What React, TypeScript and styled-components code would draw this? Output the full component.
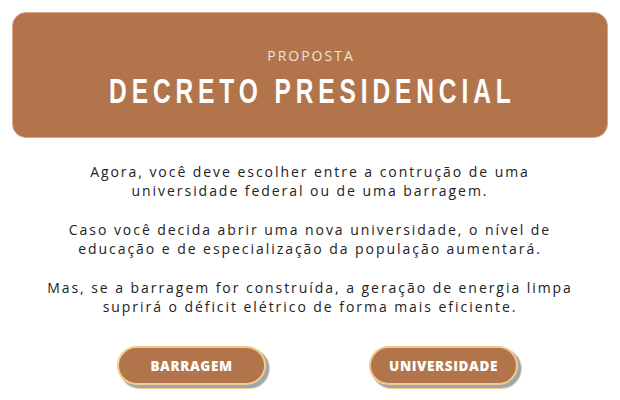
import React from "react";
import styled, { createGlobalStyle } from "styled-components";

const Global = createGlobalStyle`
  html, body { margin: 0; padding: 0; background: #ffffff; }
  body { width: 620px; height: 400px; overflow: hidden; }
`;

const Page = styled.div`
  width: 620px;
  height: 400px;
  box-sizing: border-box;
  padding: 12px 12px 0 12px;
  display: flex;
  flex-direction: column;
  align-items: center;
`;

const Header = styled.header`
  width: 596px;
  height: 126px;
  box-sizing: border-box;
  background: #b2754b;
  border: 1px solid #d3a888;
  border-radius: 14px;
  display: flex;
  flex-direction: column;
  align-items: center;
  justify-content: center;
  gap: 6px;
  padding-top: 7px;
`;

const Kicker = styled.div`
  font-family: "Open Sans", "Liberation Sans", sans-serif;
  font-size: 14px;
  font-weight: 400;
  letter-spacing: 2px;
  color: #f3e2d6;
  line-height: 18px;
  padding-left: 2px;
`;

const Title = styled.h1`
  margin: 0;
  display: inline-block;
  font-family: "Liberation Sans", "DejaVu Sans", sans-serif;
  font-weight: 700;
  font-size: 35px;
  line-height: 40px;
  letter-spacing: 7px;
  color: #ffffff;
  white-space: nowrap;
  transform: scaleX(0.7);
  transform-origin: center;
  padding-left: 7px;
`;

const Body = styled.div`
  margin-top: 24px;
  display: flex;
  flex-direction: column;
  align-items: center;
  gap: 20px;
`;

const Para = styled.p`
  margin: 0;
  text-align: center;
  font-family: "Open Sans", "Liberation Sans", sans-serif;
  font-size: 14px;
  line-height: 19px;
  letter-spacing: 1.95px;
  color: #222222;
`;

const Actions = styled.div`
  margin-top: 30px;
  margin-left: 15px;
  display: flex;
  gap: 103px;
`;

const Choice = styled.button`
  width: 149px;
  height: 39px;
  box-sizing: border-box;
  background: #b2754b;
  border: 2px solid #f2ca8c;
  border-radius: 20px;
  box-shadow: 3px 3px 0 0 #9ba6b6, 3px 3px 0 1px #f2cf95;
  color: #ffffff;
  font-family: "Open Sans", "Liberation Sans", sans-serif;
  font-weight: 800;
  font-size: 13.5px;
  letter-spacing: 0.6px;
  cursor: pointer;
  padding: 0;
`;

export default function App() {
  return (
    <>
      <Global />
      <Page>
        <Header>
          <Kicker>PROPOSTA</Kicker>
          <Title>DECRETO PRESIDENCIAL</Title>
        </Header>
        <Body>
          <Para>
            Agora, você deve escolher entre a contrução de uma
            <br />
            universidade federal ou de uma barragem.
          </Para>
          <Para>
            Caso você decida abrir uma nova universidade, o nível de
            <br />
            educação e de especialização da população aumentará.
          </Para>
          <Para>
            Mas, se a barragem for construída, a geração de energia limpa
            <br />
            suprirá o déficit elétrico de forma mais eficiente.
          </Para>
        </Body>
        <Actions>
          <Choice>BARRAGEM</Choice>
          <Choice>UNIVERSIDADE</Choice>
        </Actions>
      </Page>
    </>
  );
}
